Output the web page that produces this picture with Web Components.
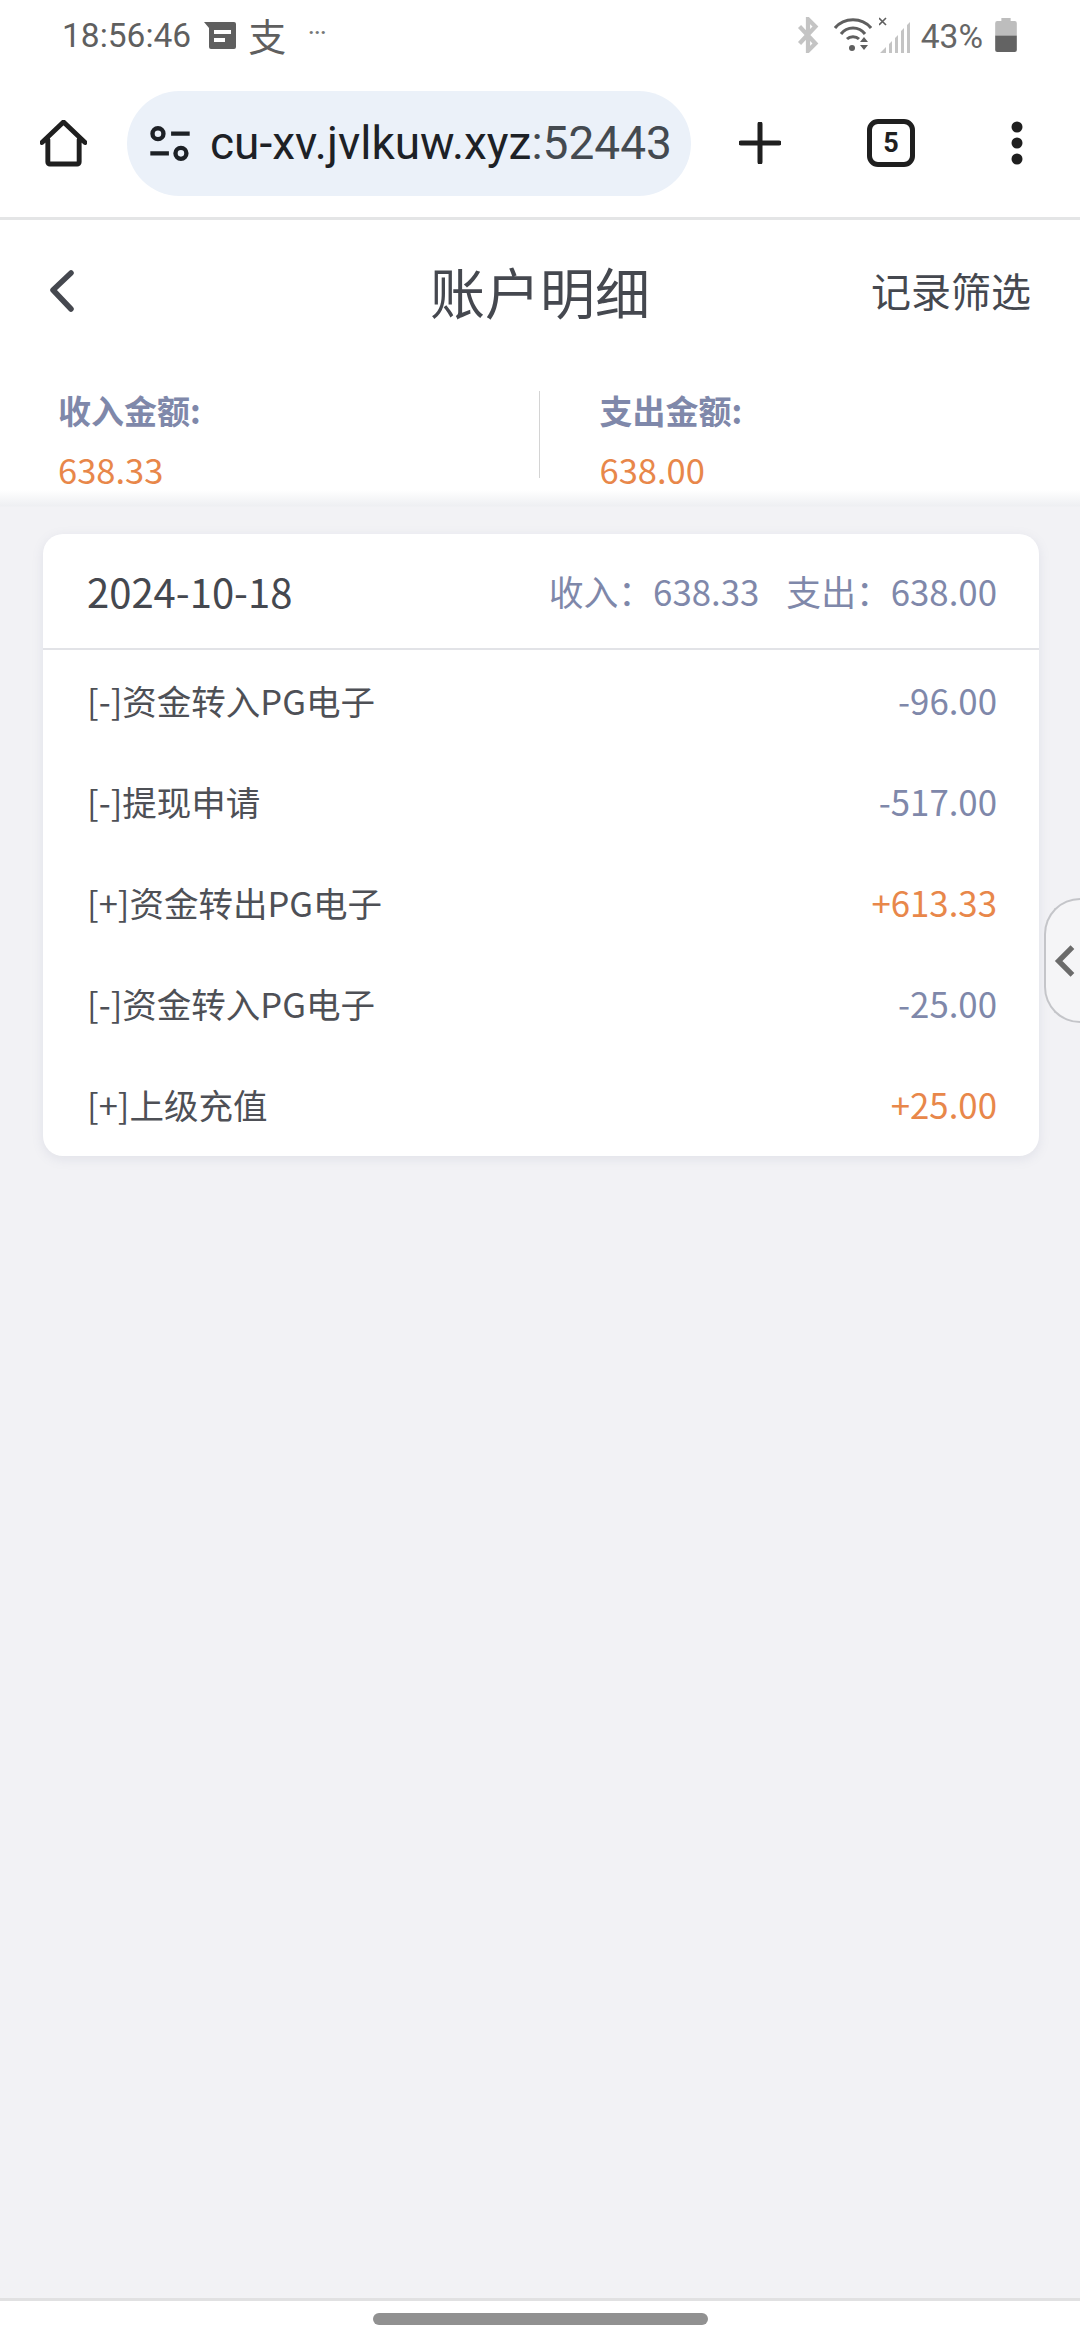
<!DOCTYPE html>
<html lang="zh">
<head>
<meta charset="utf-8">
<title>账户明细</title>
<style>
    html, body {
        margin: 0;
        padding: 0;
        width: 1080px;
        height: 2340px;
        overflow: hidden;
    }
    body {
        display: flex;
        flex-direction: column;
        position: relative;
        background-color: #f2f2f5;
        font-family: "Noto Sans CJK SC", "Noto Sans", sans-serif;
    }
</style>
</head>
<body>
    <status-bar></status-bar>
    <browser-toolbar url="cu-xv.jvlkuw.xyz" port=":52443" tabs="5"></browser-toolbar>
    <page-header title="账户明细" action="记录筛选"></page-header>
    <summary-bar income="638.33" expense="638.00"></summary-bar>
    <main-area>
        <record-card date="2024-10-18" income="638.33" expense="638.00">
            <record-row label="[-]资金转入PG电子" amount="-96.00"></record-row>
            <record-row label="[-]提现申请" amount="-517.00"></record-row>
            <record-row label="[+]资金转出PG电子" amount="+613.33"></record-row>
            <record-row label="[-]资金转入PG电子" amount="-25.00"></record-row>
            <record-row label="[+]上级充值" amount="+25.00"></record-row>
        </record-card>
    </main-area>
    <side-tab></side-tab>
    <nav-bar></nav-bar>

<script>
class StatusBar extends HTMLElement {
    connectedCallback() {
        this.attachShadow({ mode: 'open' });
        this.shadowRoot.innerHTML = `
            <style>
                :host {
                    display: flex;
                    align-items: center;
                    height: 73px;
                    box-sizing: border-box;
                    padding: 0 62px 3px;
                    background-color: #fff;
                    color: #5f5f5f;
                    font-family: Roboto, sans-serif;
                    font-size: 33.5px;
                }
                .left, .right { display: flex; align-items: center; }
                .right { margin-left: auto; margin-right: 1px; }
                .time { line-height: 70px; position: relative; top: 1px; }
                .zhi {
                    font-family: "Noto Sans CJK SC", sans-serif;
                    font-size: 38px;
                    line-height: 40px;
                    margin-left: 11px;
                }
                .dots { font-size: 20px; font-weight: 700; color: #777; margin-left: 22px; position: relative; top: -3px; }
                .pct { color: #666; margin: 0 12px 0 10px; position: relative; top: 1px; }
                svg { display: block; }
            </style>
            <div class="left">
                <span class="time">18:56:46</span>
                <svg style="margin-left:13px" width="33" height="28" viewBox="0 0 33 28">
                    <path fill="#5f5f5f" fill-rule="evenodd" d="M0 1h30a2 2 0 0 1 2 2v23a2 2 0 0 1-2 2H7a2 2 0 0 1-2-2V7zM10 9v4h17V9zM10 17v4h11v-4z"/>
                </svg>
                <span class="zhi">支</span>
                <span class="dots">···</span>
            </div>
            <div class="right">
                <svg width="22" height="36" viewBox="0 0 20 34">
                    <path fill="none" stroke="#c4c4c4" stroke-width="4" d="M2 9l15 16-7 7V2l7 7L2 25"/>
                </svg>
                <svg style="margin-left:15px" width="38" height="36" viewBox="0 0 38 36">
                    <g fill="none" stroke="#5f5f5f" stroke-width="3">
                        <path d="M1 11C10 0 28 0 37 11"/>
                        <path d="M7 17C13 9 25 9 31 17"/>
                        <path d="M13 22c3-3 9-3 12 0"/>
                    </g>
                    <circle cx="18" cy="31" r="3" fill="#5f5f5f"/>
                    <path fill="#5f5f5f" d="M30 20l4 5h-8zM26 28h8l-4 5z"/>
                </svg>
                <svg style="margin-left:7px" width="32" height="36" viewBox="0 0 32 36">
                    <path stroke="#5f5f5f" stroke-width="1.6" d="M0 1l7 7M7 1L0 8"/>
                    <path fill="#c4c4c4" d="M1 36l6-6v6zM10 36V27l3-3v12zM16 36V21l3-3v18zM22 36V14l3-3v25zM28 36V8l3-3v31z"/>
                </svg>
                <span class="pct">43%</span>
                <svg width="22" height="34" viewBox="0 0 21 33">
                    <path fill="#bdbdbd" d="M6 0h9v3h4a2 2 0 0 1 2 2v12H0V5a2 2 0 0 1 2-2h4z"/>
                    <path fill="#636363" d="M0 17h21v14a2 2 0 0 1-2 2H2a2 2 0 0 1-2-2z"/>
                </svg>
            </div>
        `;
    }
}

class BrowserToolbar extends HTMLElement {
    connectedCallback() {
        const url = this.getAttribute('url') || '';
        const port = this.getAttribute('port') || '';
        const tabs = this.getAttribute('tabs') || '';

        this.attachShadow({ mode: 'open' });
        this.shadowRoot.innerHTML = `
            <style>
                :host {
                    display: flex;
                    align-items: center;
                    height: 147px;
                    padding-bottom: 4px;
                    box-sizing: border-box;
                    background-color: #fff;
                    border-bottom: 3px solid #e4e5e6;
                    font-family: Roboto, sans-serif;
                    color: #1f1f1f;
                }
                .home { margin-left: 40px; width: 47px; flex: none; }
                .pill {
                    display: flex;
                    align-items: center;
                    width: 564px;
                    height: 105px;
                    margin-left: 40px;
                    box-sizing: border-box;
                    padding-left: 22px;
                    border-radius: 53px;
                    background-color: #ebf1f9;
                    flex: none;
                }
                .url {
                    margin-left: 19px;
                    font-size: 46px;
                    white-space: nowrap;
                    color: #1d2126;
                }
                .url span { color: #444a50; }
                .plus { margin-left: 48px; flex: none; }
                .tabs {
                    margin-left: 86px;
                    width: 48px;
                    height: 48px;
                    box-sizing: border-box;
                    border: 5px solid #1f1f1f;
                    border-radius: 11px;
                    display: flex;
                    align-items: center;
                    justify-content: center;
                    font-size: 27px;
                    font-weight: 700;
                    flex: none;
                }
                .more { margin-left: 96px; flex: none; }
                svg { display: block; }
            </style>
            <svg class="home" height="47" viewBox="0 0 48 48">
                <path fill="none" stroke="#1f1f1f" stroke-width="5" stroke-linecap="round" stroke-linejoin="round" d="M2 23L24 2l22 21M8 20v23a2 2 0 0 0 2 2h28a2 2 0 0 0 2-2V20"/>
            </svg>
            <div class="pill">
                <svg width="42" height="35" viewBox="0 0 38 32">
                    <g fill="none" stroke="#1d2126" stroke-width="4">
                        <circle cx="8" cy="7" r="5"/>
                        <circle cx="29" cy="25" r="5"/>
                        <path d="M20 7h17M1 25h17"/>
                    </g>
                </svg>
                <div class="url">${url}<span>${port}</span></div>
            </div>
            <svg class="plus" width="42" height="42" viewBox="0 0 42 42">
                <path stroke="#1f1f1f" stroke-width="5" stroke-linecap="round" d="M21 2v38M2 21h38"/>
            </svg>
            <div class="tabs">${tabs}</div>
            <svg class="more" width="12" height="44" viewBox="0 0 12 44">
                <circle cx="6" cy="6" r="5.5" fill="#1f1f1f"/>
                <circle cx="6" cy="22" r="5.5" fill="#1f1f1f"/>
                <circle cx="6" cy="38" r="5.5" fill="#1f1f1f"/>
            </svg>
        `;
    }
}

class PageHeader extends HTMLElement {
    connectedCallback() {
        const title = this.getAttribute('title') || '';
        const action = this.getAttribute('action') || '';

        this.attachShadow({ mode: 'open' });
        this.shadowRoot.innerHTML = `
            <style>
                :host {
                    display: grid;
                    grid-template-columns: 1fr auto 1fr;
                    align-items: center;
                    height: 144px;
                    box-sizing: border-box;
                    padding: 0 49px 5px;
                    background-color: #fff;
                    color: #45484f;
                }
                svg { display: block; margin-top: 3px; }
                .title { font-size: 55px; line-height: 70px; }
                .action { justify-self: end; font-size: 40px; line-height: 60px; }
            </style>
            <svg width="26" height="42" viewBox="0 0 26 42">
                <path fill="none" stroke="#45484f" stroke-width="5.5" stroke-linecap="round" stroke-linejoin="round" d="M22 3L4 20l18 19"/>
            </svg>
            <div class="title">${title}</div>
            <div class="action">${action}</div>
        `;
    }
}

class SummaryBar extends HTMLElement {
    connectedCallback() {
        const income = this.getAttribute('income') || '';
        const expense = this.getAttribute('expense') || '';

        this.attachShadow({ mode: 'open' });
        this.shadowRoot.innerHTML = `
            <style>
                :host {
                    display: flex;
                    height: 143px;
                    box-sizing: border-box;
                    padding: 27px 0 0 58px;
                    background: linear-gradient(#fff 0, #fff 126px, #eeeff2 142px, #f2f2f5 143px);
                }
                .cell { width: 483px; }
                .cell + .cell {
                    padding-left: 60px;
                    border-left: 1px solid #d4d4d4;
                    height: 87px;
                }
                .label {
                    font-size: 33px;
                    font-weight: 700;
                    line-height: 44px;
                    margin-top: -3px;
                    color: #7f88aa;
                }
                .value {
                    font-size: 34.5px;
                    line-height: 44px;
                    margin-top: 15px;
                    color: #e8874a;
                }
            </style>
            <div class="cell">
                <div class="label">收入金额:</div>
                <div class="value">${income}</div>
            </div>
            <div class="cell">
                <div class="label">支出金额:</div>
                <div class="value">${expense}</div>
            </div>
        `;
    }
}

class MainArea extends HTMLElement {
    connectedCallback() {
        this.attachShadow({ mode: 'open' });
        this.shadowRoot.innerHTML = `
            <style>
                :host {
                    display: block;
                    flex: 1;
                    padding: 27px 41px 0 43px;
                    background-color: #f2f2f5;
                }
            </style>
            <slot></slot>
        `;
    }
}

class RecordCard extends HTMLElement {
    connectedCallback() {
        const date = this.getAttribute('date') || '';
        const income = this.getAttribute('income') || '';
        const expense = this.getAttribute('expense') || '';

        this.attachShadow({ mode: 'open' });
        this.shadowRoot.innerHTML = `
            <style>
                :host {
                    display: block;
                    height: 622px;
                    border-radius: 20px;
                    background-color: #fff;
                    box-shadow: 0 3px 12px rgba(120, 125, 160, 0.14);
                    overflow: hidden;
                }
                .head {
                    display: flex;
                    align-items: center;
                    justify-content: space-between;
                    height: 114px;
                    padding: 0 42px 0 44px;
                    border-bottom: 2px solid #e2e3e7;
                }
                .date { font-size: 40px; color: #45484f; }
                .totals { display: flex; gap: 27px; font-size: 34.8px; color: #7f88aa; white-space: pre; }
            </style>
            <div class="head">
                <span class="date">${date}</span>
                <span class="totals"><span>收入：${income}</span><span>支出：${expense}</span></span>
            </div>
            <slot></slot>
        `;
    }
}

class RecordRow extends HTMLElement {
    connectedCallback() {
        const label = this.getAttribute('label') || '';
        const amount = this.getAttribute('amount') || '';
        const positive = amount.startsWith('+');

        this.attachShadow({ mode: 'open' });
        this.shadowRoot.innerHTML = `
            <style>
                :host {
                    display: flex;
                    align-items: center;
                    justify-content: space-between;
                    height: 101px;
                    box-sizing: border-box;
                    padding: 0 42px 2px 44px;
                }
                .label { font-size: 34.5px; color: #4e5056; }
                .amount { font-size: 34.8px; color: ${positive ? '#e8874a' : '#7f88aa'}; }
            </style>
            <span class="label">${label}</span>
            <span class="amount">${amount}</span>
        `;
    }
}

class SideTab extends HTMLElement {
    connectedCallback() {
        this.attachShadow({ mode: 'open' });
        this.shadowRoot.innerHTML = `
            <style>
                :host {
                    display: flex;
                    align-items: center;
                    position: absolute;
                    left: 1044px;
                    top: 898px;
                    width: 36px;
                    height: 125px;
                    box-sizing: border-box;
                    padding-left: 8px;
                    background-color: #f5f5f7;
                    border: 2px solid #c4c5c9;
                    border-right: none;
                    border-radius: 40px 0 0 40px;
                }
                svg { display: block; }
            </style>
            <svg width="22" height="34" viewBox="0 0 20 32">
                <path fill="none" stroke="#6b6b6b" stroke-width="5" d="M17 3L4 16l13 13"/>
            </svg>
        `;
    }
}

class NavBar extends HTMLElement {
    connectedCallback() {
        this.attachShadow({ mode: 'open' });
        this.shadowRoot.innerHTML = `
            <style>
                :host {
                    display: flex;
                    justify-content: center;
                    height: 42px;
                    box-sizing: border-box;
                    padding-top: 12px;
                    background-color: #fff;
                    border-top: 3px solid #e1e1e2;
                }
                .handle {
                    width: 335px;
                    height: 12px;
                    border-radius: 6px;
                    background-color: #919191;
                }
            </style>
            <div class="handle"></div>
        `;
    }
}

customElements.define('status-bar', StatusBar);
customElements.define('browser-toolbar', BrowserToolbar);
customElements.define('page-header', PageHeader);
customElements.define('summary-bar', SummaryBar);
customElements.define('main-area', MainArea);
customElements.define('record-card', RecordCard);
customElements.define('record-row', RecordRow);
customElements.define('side-tab', SideTab);
customElements.define('nav-bar', NavBar);
</script>
</body>
</html>
